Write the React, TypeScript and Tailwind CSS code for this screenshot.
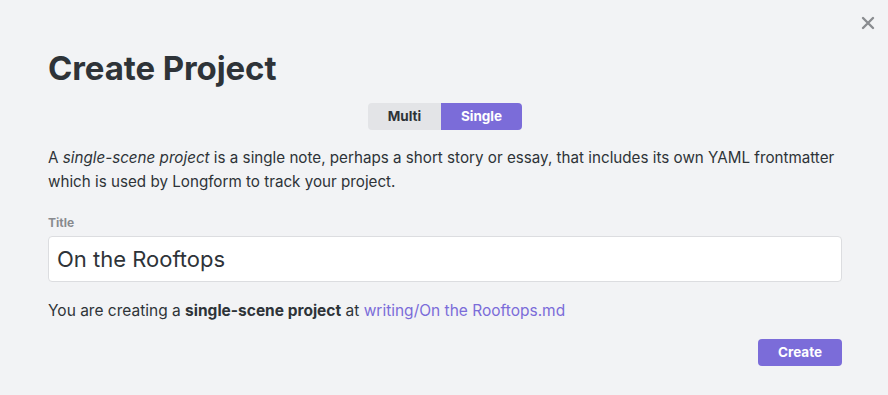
import React, { useState } from 'react';

const App: React.FC = () => {
  const [mode, setMode] = useState<'multi' | 'single'>('single');
  const [title, setTitle] = useState('On the Rooftops');

  return (
    <div
      className="relative w-[888px] h-[395px] bg-[#f2f3f5] text-[#2e3338] overflow-hidden"
      style={{ fontFamily: 'Inter, "Noto Sans", sans-serif' }}
    >
      <button className="absolute right-[10px] top-[13px] w-[20px] h-[20px] flex items-center justify-center text-[#8a8c90]">
        <svg width="16" height="16" viewBox="0 0 16 16" fill="none" stroke="currentColor" strokeWidth="2.4" strokeLinecap="round">
          <path d="M3 3 L13 13 M13 3 L3 13" />
        </svg>
      </button>

      <div className="pl-[48px] pr-[46px] pt-[48px]">
        <h1 className="text-[33px] leading-[40px] font-bold tracking-[-0.1px]">Create Project</h1>

        <div className="flex justify-center mt-[15px]">
          <div className="flex h-[27px] rounded-[4px] overflow-hidden text-[13.5px] font-bold">
            <button
              onClick={() => setMode('multi')}
              className={`w-[73px] ${mode === 'multi' ? 'bg-[#7b6cd9] text-white' : 'bg-[#e3e4e7] text-[#2e3338]'}`}
            >
              Multi
            </button>
            <button
              onClick={() => setMode('single')}
              className={`w-[81px] ${mode === 'single' ? 'bg-[#7b6cd9] text-white' : 'bg-[#e3e4e7] text-[#2e3338]'}`}
            >
              Single
            </button>
          </div>
        </div>

        <p className="mt-[16px] text-[15.2px] leading-[24px]">
          A <em>single-scene project</em> is a single note, perhaps a short story or essay, that includes its own YAML frontmatter which is used by Longform to track your project.
        </p>

        <div className="mt-[21px] text-[12px] font-bold text-[#888a8e] leading-[16px]">Title</div>
        <input
          value={title}
          onChange={(e) => setTitle(e.target.value)}
          className="mt-[5px] w-full h-[46px] bg-white border border-[#dcdde0] rounded-[4px] px-[8px] text-[22px] text-[#2e3338] outline-none"
        />

        <p className="mt-[17px] text-[15.5px] leading-[24px]">
          You are creating a <strong>single-scene project</strong> at{' '}
          <span className="text-[#7b6cd9]">writing/{title}.md</span>
        </p>

        <div className="flex justify-end mt-[16px]">
          <button className="w-[84px] h-[27px] rounded-[4px] bg-[#7b6cd9] text-white text-[13.5px] font-bold">Create</button>
        </div>
      </div>
    </div>
  );
};

export default App;
